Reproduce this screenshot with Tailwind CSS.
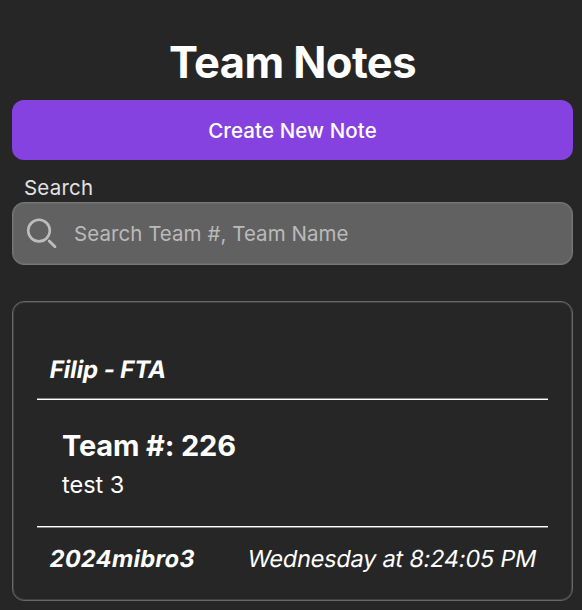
<!DOCTYPE html>
<html lang="en"><head><meta charset="utf-8"><title>Team Notes</title>
<script src="https://cdn.jsdelivr.net/npm/@tailwindcss/browser@4"></script></head>
<body class="bg-[#262626] text-white font-['Inter',sans-serif]">
<main class="h-[610px] w-[582px] overflow-hidden pl-3 pr-[9px] pt-9 flex flex-col">
<h1 class="h-[52px] mb-3 text-center text-[43.5px] leading-[53px] font-bold whitespace-nowrap tracking-[-0.6px]">Team Notes</h1>
<button class="h-[60px] shrink-0 rounded-[12px] bg-[#8642e0] pt-[2px] text-[20.5px] tracking-[0.1px] font-medium">Create New Note</button>
<label class="h-[42px] shrink-0 pl-3 pt-[14px] text-[20.5px] leading-7 tracking-[0.2px] text-[#e2e2e2]">Search</label>
<div class="h-[63px] shrink-0 flex items-center rounded-[12px] border border-[#777] bg-[#616161] pl-[13px] text-[20.5px] tracking-[0.05px] text-[#bababa] shadow-[inset_0_0_0_1px_#6a6a6a]">
<svg class="size-8 mr-4" viewBox="0 0 32 32" fill="none" stroke="#bdbdbd"><circle cx="13" cy="12.6" r="10.8" stroke-width="2.6"/><path d="m23.2 23 5.8 5.8" stroke-width="2.8" stroke-linecap="round"/></svg>
<span class="pt-[2px]">Search Team #, Team Name</span></div>
<article class="mt-9 h-[300px] shrink-0 rounded-[12px] border border-[#686868] px-6 flex flex-col shadow-[inset_0_0_0_1px_#404040]">
<h2 class="h-[96px] px-[13px] pt-[50px] text-[24px] leading-9 font-bold"><span class="inline-block -skew-x-[10deg] tracking-[-0.1px]">Filip - FTA</span></h2>
<div class="h-[2px] bg-linear-to-b from-[#868686] from-50% to-white to-50%"></div>
<section class="h-[126px] pl-[25px] pt-[26px]"><h3 class="text-[29px] leading-10 font-bold tracking-[-0.15px]">Team #: 226</h3><p class="pt-[1px] text-[23.5px] leading-9">test 3</p></section>
<div class="h-[2px] bg-linear-to-b from-white from-50% to-[#868686] to-50%"></div>
<footer class="flex justify-between pl-[13px] pr-3 pt-[13px] text-[23.5px] leading-9 whitespace-nowrap"><strong class="-skew-x-[10deg] tracking-[0.3px]">2024mibro3</strong><time class="-skew-x-[10deg] tracking-[-0.23px]">Wednesday at 8:24:05 PM</time></footer>
</article></main></body></html>
